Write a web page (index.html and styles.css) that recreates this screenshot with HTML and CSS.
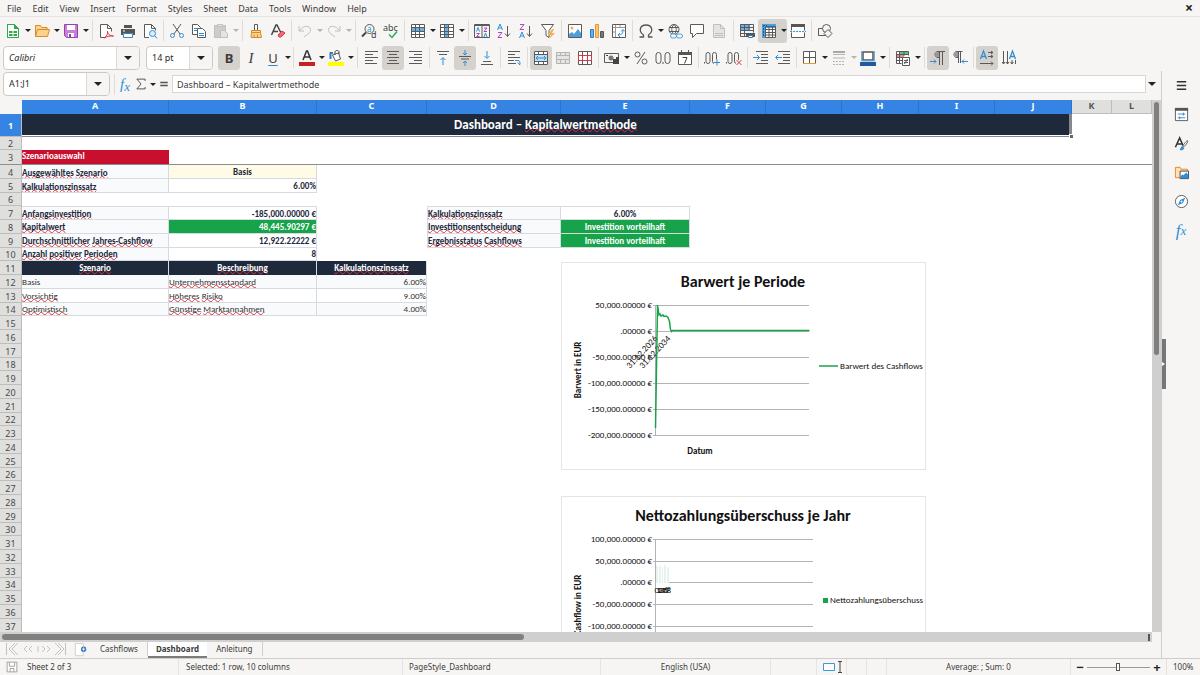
FILE: index.html
```
<!DOCTYPE html>
<html lang="en">
<head>
<meta charset="utf-8">
<title>Dashboard – Kapitalwertmethode</title>
<link rel="stylesheet" href="styles.css">
</head>
<body>
<div class="app">
<header class="menubar">
<nav class="menus"><button>File</button><button>Edit</button><button>View</button><button>Insert</button><button>Format</button><button>Styles</button><button>Sheet</button><button>Data</button><button>Tools</button><button>Window</button><button>Help</button></nav>
<button class="close" aria-label="Close">×</button>
</header>

<div class="toolbar standard">
<button class="tb" aria-label="New"><svg viewBox="0 0 16 16"><path class="g" fill="#fff" d="M2.500 1.500h7l4 4v9h-11zM9.500 1.500v4h4"/><path fill="#fff" stroke="#2fa84f" d="M2.500 1.500h7l4 4v9h-11z"/><path fill="#2fa84f" d="M9 1l5 5H9zM4 8h8v5H4z"/><path stroke="#fff" d="M4 10.500h8M8 8v5"/></svg></button><button class="dd" aria-label="New options"></button>
<button class="tb" aria-label="Open"><svg viewBox="0 0 16 16"><path fill="#fbd38c" stroke="#d98b2b" d="M1.500 13.500v-11h5l1.500 2h5v2M1.500 13.500l2-7h12l-2 7z"/></svg></button><button class="dd" aria-label="Open options"></button>
<button class="tb" aria-label="Save"><svg viewBox="0 0 16 16"><path fill="#c77fd8" stroke="#9a3fb0" d="M1.500 1.500h13v13h-11l-2-2z"/><path fill="#fff" d="M4 2h8v5H4zM5 10h6v4H5z"/><path fill="#9a3fb0" d="M6 11h2v3H6z"/></svg></button><button class="dd" aria-label="Save options"></button>
<i class="sep"></i>
<button class="tb" aria-label="Export PDF"><svg viewBox="0 0 16 16"><path class="g" fill="#fff" d="M8 14.500H2.500v-13h7l4 4v3M9.500 1.500v4h4"/><path stroke="#dc3545" d="M6 15c3-2 4-4 3.500-7 0 3 2 5 6 5-3-.5-6 .3-9.500 2"/></svg></button>
<button class="tb" aria-label="Print"><svg viewBox="0 0 16 16"><path fill="#555" d="M1 6h14v6h-2v-2H3v2H1zM4 2h8v3H4z"/><path fill="#fff" stroke="#3a87c8" d="M3.500 10.500h9v4h-9z"/><path stroke="#fff" d="M3 8h2"/></svg></button>
<button class="tb" aria-label="Preview"><svg viewBox="0 0 16 16"><path class="g" fill="#fff" d="M7 14.500H2.500v-13h7l4 4v2M9.500 1.500v4h4"/><circle cx="10.500" cy="10.500" r="3" fill="#dbeefa" stroke="#2f8fd6"/><path stroke="#2f8fd6" d="M13 13l2 2.500"/></svg></button>
<i class="sep tight"></i>
<button class="tb" aria-label="Cut"><svg viewBox="0 0 16 16"><path class="g" d="M4 1l7 10M12 1L5 11"/><circle cx="3.500" cy="12.500" r="2" stroke="#2f8fd6"/><circle cx="12.500" cy="12.500" r="2" stroke="#2f8fd6"/></svg></button>
<button class="tb" aria-label="Copy"><svg viewBox="0 0 16 16"><path class="g" fill="#fff" d="M1.500 1.500h5l3 3v7h-8z"/><path class="g" fill="#fff" d="M6.500 5.500h5l3 3v6h-8z"/><path stroke="#2f8fd6" d="M3 5.500h3M3 7.500h3M8 10.500h5M8 12.500h5"/></svg></button>
<button class="tb off" aria-label="Paste"><svg viewBox="0 0 16 16"><path fill="#bbb" stroke="#aaa" d="M1.500 2.500h11v12h-11z"/><path fill="#ddd" stroke="#aaa" d="M4.500 1.500h5v2h-5zM7.500 7.500h4l3 3v4h-7z"/></svg></button><button class="dd off" aria-label="Paste options"></button>
<i class="sep"></i>
<button class="tb" aria-label="Clone formatting"><svg viewBox="0 0 16 16"><path class="g" fill="#fff" d="M6.500 1.500h3v6h-3z"/><path fill="#fbd38c" stroke="#d98b2b" d="M3.500 9.500v-2h9v2M3 14.500h10.500l-1-5h-9zM6 11.500v3M9.500 11.500v3"/></svg></button>
<button class="tb" aria-label="Clear formatting"><svg viewBox="0 0 16 16"><path stroke="#444" stroke-width="1.500" d="M1.500 12L6 2h1l4 8M3 8.500h5"/><path fill="#ef6b73" stroke="#dc3545" d="M8 12l4-4 3 2-4 4H9z"/></svg></button>
<i class="sep tight"></i>
<button class="tb off" aria-label="Undo"><svg viewBox="0 0 16 16"><path stroke="#aaa" d="M2 3v5h5M2.500 7.500C6 3 11 2 13 5c2 4-2 6-6 9"/></svg></button><button class="dd off" aria-label="Undo history"></button>
<button class="tb off" aria-label="Redo"><svg viewBox="0 0 16 16"><path stroke="#aaa" d="M14 3v5H9M13.500 7.500C10 3 5 2 3 5c-2 4 2 6 6 9"/></svg></button><button class="dd off" aria-label="Redo history"></button>
<i class="sep"></i>
<button class="tb" aria-label="Find and replace"><svg viewBox="0 0 16 16"><circle cx="8.500" cy="6" r="4.500" class="g"/><path stroke="#444" stroke-width="2" d="M5 9.500l-4 4"/><text x="6" y="8.500" font-size="8" fill="#2f8fd6">a</text><text x="10" y="15" font-size="9" fill="#444">d</text></svg></button>
<button class="tb" aria-label="Spelling"><svg class="wide" viewBox="0 0 18 16"><text x="1" y="8" font-size="9" fill="#444">abc</text><path stroke="#2fa860" stroke-width="1.500" d="M7 11.500l3 3 5-6"/></svg></button>
<i class="sep tight"></i>
<button class="tb" aria-label="Row"><svg viewBox="0 0 16 16"><path fill="#fff" d="M1 1h14v14H1z"/><path fill="#69b1e6" d="M1 5h14v3H1z"/><path class="g" d="M1.500 1.500h13v13h-13zM1 4.500h14M1 8.500h14M1 11.500h14M5.500 1v14M9.500 1v14"/></svg></button><button class="dd" aria-label="Row options"></button>
<button class="tb" aria-label="Column"><svg viewBox="0 0 16 16"><path fill="#fff" d="M1 1h14v14H1z"/><path fill="#69b1e6" d="M5 1h4v14H5z"/><path class="g" d="M1.500 1.500h13v13h-13zM1 4.500h14M1 8.500h14M1 11.500h14M5.500 1v14M9.500 1v14"/></svg></button><button class="dd" aria-label="Column options"></button>
<i class="sep"></i>
<button class="tb" aria-label="Sort"><svg viewBox="0 0 16 16"><path class="g" d="M.5 1.500h15v13H.500zM8 1v14M.5 2.500h15"/><path stroke="#2f8fd6" d="M2.500 8.500l1.500-4 1.500 4M10 14l1.500-4 1.500 4"/><path stroke="#a84ac0" d="M2.500 10.500h3l-3 3h3M10 5h3l-3 3.500h3"/></svg></button>
<button class="tb" aria-label="Sort ascending"><svg viewBox="0 0 16 16"><path stroke="#2f8fd6" d="M1.500 7L4 1l2.500 6M2.500 5h3"/><path stroke="#a84ac0" d="M2 9.500h4l-4 5h4"/><path class="g" d="M11.500 3v10M9 10.500l2.500 3 2.500-3"/></svg></button>
<button class="tb" aria-label="Sort descending"><svg viewBox="0 0 16 16"><path stroke="#a84ac0" d="M2 1.500h4l-4 5h4"/><path stroke="#2f8fd6" d="M1.500 15L4 9l2.500 6M2.500 13h3"/><path class="g" d="M11.500 3v10M9 10.500l2.500 3 2.500-3"/></svg></button>
<button class="tb" aria-label="AutoFilter"><svg viewBox="0 0 16 16"><path class="g" fill="#fff" d="M1.500 1.500h12l-4.500 6v7l-3-2v-5z"/><path fill="#f6b04c" d="M12 6l-4 6h3l-2 4 6-6h-3l2-4z"/></svg></button>
<i class="sep tight"></i>
<button class="tb" aria-label="Insert image"><svg viewBox="0 0 16 16"><path class="g" fill="#fff" d="M1.500 1.500h13v13h-13z"/><circle cx="5" cy="5" r="1.500" fill="#f6b04c"/><path fill="#4a9fdc" d="M2 14V11l3-2 2 2 4-5 3 4v4z"/></svg></button>
<button class="tb" aria-label="Insert chart"><svg viewBox="0 0 16 16"><path fill="#69b1e6" stroke="#2f7fc0" d="M1.500 6.500h3v8h-3z"/><path fill="#fbc573" stroke="#e39a35" d="M6.500 1.500h3v13h-3z"/><path fill="#777" stroke="#555" d="M11.500 8.500h3v6h-3z"/></svg></button>
<button class="tb" aria-label="Pivot table"><svg viewBox="0 0 16 16"><path class="g" fill="#fff" d="M1.500 1.500h13v13h-13z"/><path stroke="#999" d="M4.500 2v12M2 4.500h12M2 9h2M9 2v2"/><path stroke="#2f8fd6" d="M7 12c4 0 5-2 5-5M10 8.500l2-2 2 2M9 10l-2 2 2 2"/></svg></button>
<i class="sep tight"></i>
<button class="tb" aria-label="Special character"><svg viewBox="0 0 16 16"><path stroke="#555" stroke-width="1.300" d="M1.500 14h4v-2C0 8 2 2 8 2s8 6 2.500 10v2h4"/></svg></button><button class="dd" aria-label="Character list"></button>
<button class="tb" aria-label="Hyperlink"><svg viewBox="0 0 16 16"><circle cx="7" cy="6.500" r="5" class="g"/><path class="g" d="M2 4.500h10M2 8.500h10M7 1.500c-3 3-3 7 0 10M7 1.500c3 3 3 7 0 10"/><rect x="3.500" y="11" width="6" height="4" rx="2" fill="#f6f5f3" stroke="#4a9fdc"/><rect x="9.500" y="11" width="6" height="4" rx="2" fill="#f6f5f3" stroke="#4a9fdc"/></svg></button>
<button class="tb" aria-label="Comment"><svg viewBox="0 0 16 16"><path class="g" fill="#fff" d="M1.500 1.500h13v9h-7l-4 4v-4h-2z"/></svg></button>
<button class="tb off" aria-label="Headers and footers"><svg viewBox="0 0 16 16"><path fill="#ddd" stroke="#aaa" d="M2.500 1.500h7l4 4v9h-11z"/><path stroke="#aaa" d="M4 10.500h8M4 12.500h8M9.500 1.500v4h4"/></svg></button>
<i class="sep"></i>
<button class="tb" aria-label="Print area"><svg viewBox="0 0 16 16"><path fill="#69b1e6" d="M1 1h10v6H1z"/><path class="g" d="M1.500 1.500h13v8M1.500 1.500v12h6M1 4.500h13M1 7.500h13M1 10.500h6M5.500 1v12M10 1v7"/><path fill="#555" d="M7 10h9v4H7z"/><path fill="#fff" stroke="#2f7fc0" d="M9.500 12.500h4v2h-4z"/></svg></button>
<span class="on pair"><button class="tb" aria-label="Freeze rows and columns"><svg viewBox="0 0 16 16"><path fill="#fff" d="M5 5h10v10H5z"/><path fill="#4a9fdc" d="M1 1h14v4H5v10H1z"/><path class="g" d="M4.500 3.500h10v11h-10zM5 6.500h10M5 9.500h10M5 12h10M8 4v11M11.500 4v11"/><path stroke="#1c5f9c" stroke-dasharray="2 1" d="M2.500 2v12M2 2.500h4"/></svg></button><button class="dd" aria-label="Freeze options"></button></span>
<button class="tb" aria-label="Split window"><svg viewBox="0 0 16 16"><path class="g" fill="#fff" d="M1.500 1.500h13v13h-13z"/><path fill="#555" d="M1 1h14v3H1z"/><path stroke="#f6f5f3" stroke-width="2" d="M0 8.500h16"/><path stroke="#3a9ad9" stroke-dasharray="2 1" d="M0 8.500h16"/></svg></button>
<i class="sep tight"></i>
<button class="tb" aria-label="Shapes"><svg viewBox="0 0 16 16"><path class="g" d="M1.500 5.500h7v7h-7z"/><circle cx="9.500" cy="5.500" r="4" fill="#f6f5f3" class="g"/><path class="g" fill="#f6f5f3" d="M11 6.500l4 4-4 4-4-4z"/></svg></button>
</div>

<div class="toolbar formatting">
<div class="combo font"><input type="text" value="Calibri" aria-label="Font name"><button aria-label="Font list"></button></div>
<div class="combo size"><input type="text" value="14 pt" aria-label="Font size"><button aria-label="Size list"></button></div>
<button class="tb on letter bold">B</button>
<button class="tb letter ital">I</button>
<button class="tb letter under">U</button><button class="dd" aria-label="Underline options"></button>
<i class="sep tight"></i>
<button class="tb" aria-label="Font colour"><svg viewBox="0 0 16 16"><path stroke="#333" stroke-width="1.500" d="M4 10l3.500-9h1L12 10M5.500 7h5"/><path fill="#c9211e" d="M0 12h16v4H0z"/></svg></button><button class="dd" aria-label="Font colours"></button>
<button class="tb" aria-label="Highlight colour"><svg viewBox="0 0 16 16"><path fill="#fff" class="g" d="M4.500 5l6-2 2 6-5 2z"/><path stroke="#444" d="M7 5V2c0-2 4-2 4 0v2"/><path stroke="#2f7fc0" stroke-width="2" d="M2.500 9V3H5"/><path fill="#ffff00" d="M0 12h16v4H0z"/></svg></button><button class="dd" aria-label="Highlight colours"></button>
<i class="sep"></i>
<button class="tb" aria-label="Align left"><svg viewBox="0 0 16 16"><path class="g" d="M2 1.500h13M2 4.500h8M2 7.500h13M2 10.500h8M2 13.500h12"/></svg></button>
<button class="tb on" aria-label="Align centre"><svg viewBox="0 0 16 16"><path class="g" d="M2 1.500h12M4 4.500h8M2 7.500h12M4 10.500h8M2 13.500h12"/></svg></button>
<button class="tb" aria-label="Align right"><svg viewBox="0 0 16 16"><path class="g" d="M2 1.500h13M7 4.500h8M2 7.500h13M7 10.500h8M2 13.500h13"/></svg></button>
<i class="sep"></i>
<button class="tb" aria-label="Align top"><svg viewBox="0 0 16 16"><path class="g" d="M2 1.500h12M4 4.500h8"/><path stroke="#2f8fd6" d="M8 15V8M5.500 10L8 7.500l2.500 2.500"/></svg></button>
<button class="tb on" aria-label="Centre vertically"><svg viewBox="0 0 16 16"><path class="g" d="M2 6.500h12M4 9h8"/><path stroke="#2f8fd6" d="M8 0v5M6 3l2 2 2-2M8 16v-5M6 13l2-2 2 2"/></svg></button>
<button class="tb" aria-label="Align bottom"><svg viewBox="0 0 16 16"><path class="g" d="M4 11.500h8M2 14.500h12"/><path stroke="#2f8fd6" d="M8 1v7M5.500 6L8 8.500 10.500 6"/></svg></button>
<i class="sep tight"></i>
<button class="tb" aria-label="Wrap text"><svg viewBox="0 0 16 16"><path class="g" d="M2 1.500h12M2 4.500h7M2 7.500h12M2 10.500h6M2 13.500h8"/><path stroke="#2f8fd6" d="M9 10.500h3c2 0 2 2 2 4M11.500 12.500l2.500 2.500"/></svg></button>
<i class="sep tight"></i>
<button class="tb on" aria-label="Merge cells"><svg viewBox="0 0 16 16"><path fill="#fff" d="M1 1h14v14H1z"/><path fill="#bfe0f5" d="M1 5h14v6H1z"/><path class="g" d="M1.500 1.500h13v13h-13zM1 4.500h14M1 11.500h14M5.500 1v3M10.500 1v3M5.500 12v3M10.500 12v3"/><path stroke="#2f8fd6" d="M3 8h10M5 6L3 8l2 2M11 6l2 2-2 2"/></svg></button>
<button class="tb off" aria-label="Merge"><svg viewBox="0 0 16 16"><path fill="#ddd" stroke="#999" d="M1.500 2.500h13v11h-13zM1 5.500h14M1 9.500h14M5.500 2v3M10.500 2v3M5.500 10v4M10.500 10v4"/></svg></button>
<button class="tb" aria-label="Unmerge cells"><svg viewBox="0 0 16 16"><path fill="#fff" class="g" d="M1.500 1.500h13v13h-13zM5.500 1v14M10.500 1v14"/><path stroke="#dc3545" d="M1 5.500h14M1 10.500h14M1.500 5v6M5.500 5v6M10.500 5v6M14.500 5v6"/></svg></button>
<i class="sep tight"></i>
<button class="tb" aria-label="Currency"><svg viewBox="0 0 16 16"><path class="g" d="M.5 3.500h14v9H.500z"/><circle cx="7" cy="8" r="2.500" fill="#777"/><path fill="#444" d="M9 9h3v5H9zM12 7h3v7h-3zM2 5h2v1H2z"/></svg></button><button class="dd" aria-label="Currency list"></button>
<button class="tb" aria-label="Percent"><svg viewBox="0 0 16 16"><path class="g" d="M12 2L4 14"/><circle cx="4.500" cy="4.500" r="2.500" class="g"/><circle cx="11.500" cy="11.500" r="2.500" class="g"/></svg></button>
<button class="tb" aria-label="Number"><svg viewBox="0 0 16 16"><rect x="1" y="2.500" width="5" height="11" rx="2.500" class="g"/><rect x="10" y="2.500" width="5" height="11" rx="2.500" class="g"/><path fill="#555" d="M7.500 12h1v2h-1z"/></svg></button>
<button class="tb" aria-label="Date"><svg viewBox="0 0 16 16"><path class="g" fill="#fff" d="M1.500 2.500h13v12h-13z"/><path fill="#555" d="M1 2h14v3H1zM4 0h1v2H4zM11 0h1v2h-1z"/><path stroke="#444" d="M5.500 7.500h4.500l-2.500 6"/></svg></button>
<i class="sep tight"></i>
<button class="tb" aria-label="Add decimal"><svg class="wide" viewBox="0 0 18 16"><rect x="3" y="2.500" width="4" height="11" rx="2" class="g"/><rect x="9.500" y="2.500" width="4" height="11" rx="2" class="g"/><path fill="#555" d="M1 12h1v1.500H1z"/><path stroke="#f6f5f3" stroke-width="3" d="M11 12.500h6M14 9.500v6"/><path stroke="#2f8fd6" d="M11 12.500h6M14 9.500v6"/></svg></button>
<button class="tb" aria-label="Delete decimal"><svg class="wide" viewBox="0 0 18 16"><rect x="3" y="2.500" width="4" height="11" rx="2" class="g"/><rect x="9.500" y="2.500" width="4" height="11" rx="2" class="g"/><path fill="#555" d="M1 12h1v1.500H1z"/><path stroke="#f6f5f3" stroke-width="3" d="M11.500 10l5 5M16.500 10l-5 5"/><path stroke="#dc3545" d="M11.500 10l5 5M16.500 10l-5 5"/></svg></button>
<i class="sep tight"></i>
<button class="tb" aria-label="Increase indent"><svg viewBox="0 0 16 16"><path class="g" d="M3 1.500h12M8 4.500h7M8 7.500h7M8 10.500h7M3 13.500h12"/><path stroke="#2f8fd6" d="M0 7.500h6M4 5l2.500 2.500L4 10"/></svg></button>
<button class="tb" aria-label="Decrease indent"><svg viewBox="0 0 16 16"><path class="g" d="M3 1.500h12M8 4.500h7M8 7.500h7M8 10.500h7M3 13.500h12"/><path stroke="#2f8fd6" d="M1 7.500h6M3 5L.500 7.500 3 10"/></svg></button>
<i class="sep tight"></i>
<button class="tb" aria-label="Borders"><svg viewBox="0 0 16 16"><path fill="#fff" class="g" d="M1.500 1.500h12v12h-12zM7.500 1v12M1 7.500h13"/><path stroke="#e39a35" d="M1 13.500h13"/></svg></button><button class="dd" aria-label="Border list"></button>
<button class="tb off" aria-label="Border style"><svg viewBox="0 0 16 16"><path stroke="#999" d="M2 4.500h12M2 8h12"/><path stroke="#888" stroke-width="2" d="M2 2h12"/><path stroke="#999" stroke-dasharray="2 1" d="M2 11.500h12M2 14.500h12"/></svg></button><button class="dd off" aria-label="Border styles"></button>
<button class="tb" aria-label="Border colour"><svg viewBox="0 0 16 16"><path fill="#fff" stroke="#555" stroke-width="1.500" d="M3 2h10v8H3z"/><path stroke="#69b1e6" d="M1.500 1v10h13V1"/><path fill="#1c5f9c" d="M0 12h16v4H0z"/></svg></button><button class="dd" aria-label="Border colours"></button>
<i class="sep"></i>
<button class="tb" aria-label="Conditional formatting"><svg viewBox="0 0 16 16"><path fill="#fff" d="M1 1h12v12H1z"/><path fill="#5fc27c" d="M5 1h8v3H5z"/><path fill="#f08a8a" d="M1 5h8v3H1z"/><path class="g" d="M1.500 1.500h12v4M1.500 1.500v12h5M1 4.500h12M1 7.500h6M1 10.500h6M4.500 1v12M9 1v5"/><path fill="#fff" class="g" d="M7.500 7.500h7v8h-7zM9 10.500h4M9 12.500h4M12.500 9l-3 5"/></svg></button><button class="dd" aria-label="Conditional list"></button>
<i class="sep"></i>
<button class="tb on" aria-label="Left to right"><svg viewBox="0 0 16 16"><path stroke="#2f8fd6" d="M0 11.500h6M4 9.500l2 2-2 2"/><path class="g" d="M15 1.500H8c-4 0-4 6 0 6h1.500M9.500 2v13M12.500 2v13"/><path fill="#999" d="M9 2H8C4.500 2 4.500 7 8 7h1z"/></svg></button>
<button class="tb" aria-label="Right to left"><svg viewBox="0 0 16 16"><path class="g" d="M10.500 1.500H5c-4 0-4 6 0 6h1.500M6.500 2v11M8.500 2v11"/><path fill="#999" d="M6 2H5C1.500 2 1.500 7 5 7h1z"/><path stroke="#2f8fd6" d="M10 11.500h6M12 9.500l-2 2 2 2"/></svg></button>
<i class="sep tight"></i>
<button class="tb on" aria-label="Horizontal text"><svg viewBox="0 0 16 16"><path stroke="#2f8fd6" stroke-width="1.300" d="M1.500 9L4.500 1l3 8M2.500 6.500h4"/><path class="g" d="M9 2.500h5M9 6.500h5M1 13.500h13M12 1l2 1.500L12 4M12 5l2 1.500L12 8M12 11.500l2 2-2 2"/></svg></button>
<button class="tb" aria-label="Vertical text"><svg viewBox="0 0 16 16"><path stroke="#2f8fd6" stroke-width="1.300" d="M8.500 9l3-8 3 8M9.500 6.500h4"/><path class="g" d="M2.500 1v13M6.500 1v13M11 10v4M14.500 10v4M1 12l1.500 2L4 12M5 12l1.500 2L8 12M9.500 12l1.500 2 1.500-2"/></svg></button>
</div>

<div class="work">
<main class="doc">
<div class="formulabar">
<div class="combo name"><input type="text" value="A1:J1" aria-label="Name box"><button aria-label="Named ranges"></button></div>
<i class="sep"></i>
<button class="fx" aria-label="Function wizard">f<sub>x</sub></button>
<button class="fn" aria-label="Sum"><svg viewBox="0 0 16 16"><path stroke="#555" stroke-width="1.300" d="M13.500 4V1.500h-11L8 8l-5.500 6.500h11V12"/></svg></button><button class="dd" aria-label="Functions"></button>
<button class="fn" aria-label="Formula"><svg viewBox="0 0 16 16"><path stroke="#555" stroke-width="2" d="M3 6h10M3 10h10"/></svg></button>
<input class="formula" type="text" value="Dashboard – Kapitalwertmethode" aria-label="Formula">
<button class="dd big" aria-label="Expand formula bar"></button>
</div>
<div class="sheetarea">
<div class="sheet">
<table>
<colgroup><col class="w22"><col class="w147"><col class="w148"><col class="w110"><col class="w134"><col class="w129"><col class="w76"><col class="w76"><col class="w77"><col class="w76"><col class="w77"><col class="w40"><col></colgroup>
<thead><tr><th class="corner"></th><th>A</th><th>B</th><th>C</th><th>D</th><th>E</th><th>F</th><th>G</th><th>H</th><th>I</th><th>J</th><th class="plain">K</th><th class="plain">L</th></tr></thead>
<tbody>
<tr class="r1"><th class="sel">1</th><td colspan="10" class="title"><div class="titlebox">Dashboard – <u>Kapitalwertmethode</u></div></td><td colspan="2"></td></tr>
<tr class="r2"><th>2</th><td colspan="12"></td></tr>
<tr class="r3"><th>3</th><td class="red">Szenarioauswahl</td><td colspan="11"></td></tr>
<tr><th>4</th><td class="lab low"><u>Ausgewähltes</u> <u>Szenario</u></td><td class="cream mid">Basis</td><td colspan="10"></td></tr>
<tr><th>5</th><td class="lab low"><u>Kalkulationszinssatz</u></td><td class="val">6.00%</td><td colspan="10"></td></tr>
<tr><th>6</th><td colspan="12"></td></tr>
<tr><th>7</th><td class="lab top"><u>Anfangsinvestition</u></td><td class="val top">-185,000.00000 €</td><td></td><td class="lab top left"><u>Kalkulationszinssatz</u></td><td class="val mid top">6.00%</td><td colspan="7"></td></tr>
<tr><th>8</th><td class="lab"><u>Kapitalwert</u></td><td class="val green">48,445.90297 €</td><td></td><td class="lab left"><u>Investitionsentscheidung</u></td><td class="green mid">Investition vorteilhaft</td><td colspan="7"></td></tr>
<tr><th>9</th><td class="lab"><u>Durchschnittlicher</u> <u>Jahres-Cashflow</u></td><td class="val">12,922.22222 €</td><td></td><td class="lab left"><u>Ergebnisstatus</u> <u>Cashflows</u></td><td class="green mid">Investition vorteilhaft</td><td colspan="7"></td></tr>
<tr><th>10</th><td class="lab"><u>Anzahl</u> <u>positiver</u> <u>Perioden</u></td><td class="val">8</td><td colspan="10"></td></tr>
<tr><th>11</th><td class="navy"><u>Szenario</u></td><td class="navy"><u>Beschreibung</u></td><td class="navy"><u>Kalkulationszinssatz</u></td><td colspan="9"></td></tr>
<tr><th>12</th><td class="txt tint">Basis</td><td class="txt tint"><u>Unternehmensstandard</u></td><td class="num tint">6.00%</td><td colspan="9"></td></tr>
<tr><th>13</th><td class="txt"><u>Vorsichtig</u></td><td class="txt"><u>Höheres</u> <u>Risiko</u></td><td class="num">9.00%</td><td colspan="9"></td></tr>
<tr><th>14</th><td class="txt tint"><u>Optimistisch</u></td><td class="txt tint"><u>Günstige</u> <u>Marktannahmen</u></td><td class="num tint">4.00%</td><td colspan="9"></td></tr>
<tr><th>15</th><td colspan="12"></td></tr>
<tr><th>16</th><td colspan="12"></td></tr>
<tr><th>17</th><td colspan="12"></td></tr>
<tr><th>18</th><td colspan="12"></td></tr>
<tr><th>19</th><td colspan="12"></td></tr>
<tr><th>20</th><td colspan="12"></td></tr>
<tr><th>21</th><td colspan="12"></td></tr>
<tr><th>22</th><td colspan="12"></td></tr>
<tr><th>23</th><td colspan="12"></td></tr>
<tr><th>24</th><td colspan="12"></td></tr>
<tr><th>25</th><td colspan="12"></td></tr>
<tr><th>26</th><td colspan="12"></td></tr>
<tr><th>27</th><td colspan="12"></td></tr>
<tr><th>28</th><td colspan="12"></td></tr>
<tr><th>29</th><td colspan="12"></td></tr>
<tr><th>30</th><td colspan="12"></td></tr>
<tr><th>31</th><td colspan="12"></td></tr>
<tr><th>32</th><td colspan="12"></td></tr>
<tr><th>33</th><td colspan="12"></td></tr>
<tr><th>34</th><td colspan="12"></td></tr>
<tr><th>35</th><td colspan="12"></td></tr>
<tr><th>36</th><td colspan="12"></td></tr>
<tr><th>37</th><td colspan="12"></td></tr>
</tbody>
</table>
<i class="handle"></i>
<svg class="chart first" viewBox="0 0 365 208">
<text class="ct" x="182" y="25">Barwert je Periode</text>
<path class="grid" d="M92 43.500h156M92 69.500h156M92 95.500h156M92 121.500h156M92 147.500h156M92 173.500h156M94.500 43v131"/>
<g class="ax"><text x="91" y="46">50,000.00000 €</text><text x="91" y="72">.00000 €</text><text x="91" y="98">-50,000.00000 €</text><text x="91" y="124">-100,000.00000 €</text><text x="91" y="150">-150,000.00000 €</text><text x="91" y="176">-200,000.00000 €</text>
<text transform="translate(97 77) rotate(-47)">31.12.2026</text><text transform="translate(110 77) rotate(-47)">31.12.2034</text></g>
<path class="series" d="M94.500 166L96.500 43l1.500 10 1-1 1 2 2-1 1 1.500 2-.5 2 1.500 1.500 4 1 8 1 2 1-1h137"/>
<text class="at" transform="translate(20 108) rotate(-90)">Barwert in EUR</text>
<text class="at" x="139" y="192">Datum</text>
<path class="series" d="M258 104h19"/><text class="lg" x="279" y="107">Barwert des Cashflows</text>
</svg>
<svg class="chart second" viewBox="0 0 365 208">
<text class="ct" x="182" y="25">Nettozahlungsüberschuss je Jahr</text>
<path class="grid" d="M92 43.500h160M92 65.500h160M108 86.500h144M92 108.500h160M92 130.500h160M94.500 43v131"/>
<path fill="#e9f3ee" d="M95 70h2v17h-2zM98 70h2v17h-2zM101 71h1v16h-1zM103 69h2v18h-2zM106 71h2v16h-2z"/>
<g class="ax"><text x="91" y="46">100,000.00000 €</text><text x="91" y="68">50,000.00000 €</text><text x="91" y="89">.00000 €</text><text x="91" y="111">-50,000.00000 €</text><text x="91" y="133">-100,000.00000 €</text>
<text x="98" y="97">0</text><text x="100" y="97">1</text><text x="101" y="97">2</text><text x="103" y="97">3</text><text x="104" y="97">4</text><text x="106" y="97">5</text><text x="107" y="97">6</text><text x="109" y="97">7</text><text x="110" y="97">8</text></g>
<text class="at" transform="translate(20 109) rotate(-90)">Cashflow in EUR</text>
<path fill="#18a348" d="M262 102h5v5h-5z"/><text class="lg" x="269" y="107">Nettozahlungsüberschuss</text>
</svg>
</div>
<div class="vscroll"><i></i></div>
</div>
<div class="hscroll"><i></i><b></b></div>
<nav class="tabs">
<svg class="tabnav" viewBox="0 0 62 14"><path d="M1.500 1v12M10 1L4 7l6 6M13 1L7 7l6 6M22 4l-3 3 3 3M27 4l-3 3 3 3M33 4v6M37 4l3 3-3 3M42 4l3 3-3 3M50 1l6 6-6 6M53 1l6 6-6 6M60.500 1v12"/></svg>
<button class="addtab" aria-label="Add sheet"><svg viewBox="0 0 16 16"><path fill="#fff" stroke="#ccc" d="M1.500.500h9v14h-9z"/><circle cx="11" cy="7" r="3" fill="#2a6ebb"/><path stroke="#fff" d="M9 7h4M11 5v4"/></svg></button>
<button class="tab">Cashflows</button><button class="tab active">Dashboard</button><button class="tab">Anleitung</button>
</nav>
</main>
<aside class="sidebar">
<button aria-label="Sidebar settings"><svg viewBox="0 0 16 16"><path stroke="#333" stroke-width="1.500" d="M3 4h10M3 8h10M3 12h10"/></svg></button>
<button aria-label="Properties"><svg viewBox="0 0 16 16"><path class="g" fill="#fff" d="M1.500 1.500h13v13h-13z"/><path fill="#555" d="M1 1h14v3H1z"/><path stroke="#3a87c8" d="M4 7.500h8M10 6v3M4 11.500h8M6 10v3"/></svg></button>
<button aria-label="Styles"><svg viewBox="0 0 16 16"><path stroke="#333" stroke-width="1.600" d="M1.500 12L6 2l4 9M3 8.500h6"/><path fill="#fff" stroke="#555" d="M14.500 5c1 1-3 6-4 6.500l-1-1c.5-1 4-6 5-5.500z"/><path fill="#2f8fd6" d="M9 11l2 2c-1 2-3 2.500-5 2 1-1 1-4 3-4z"/></svg></button>
<button aria-label="Gallery"><svg viewBox="0 0 16 16"><path fill="#fde3b5" stroke="#e8842f" d="M1.500 13.500v-11h5l1 2h7v9z"/><path fill="#fff" stroke="#444" d="M6.500 6.500h9v8h-9z"/><path fill="#2f8fd6" d="M7 14v-2l2-2 1 1 3-3 2 2v4z"/></svg></button>
<button aria-label="Navigator"><svg viewBox="0 0 16 16"><circle cx="8" cy="8" r="6.500" fill="#fff" class="g"/><path fill="#2f8fd6" d="M12 4l-2.500 5.500L4 12l2.500-5.500z"/><circle cx="8" cy="8" r="1" fill="#fff"/></svg></button>
<button class="fx" aria-label="Functions">f<sub>x</sub></button>
<i class="grip"></i>
</aside>
</div>

<footer class="status">
<span class="s0"><svg viewBox="0 0 16 16"><path fill="#fff" stroke="#888" d="M1.500 1.500h13v13h-13z"/><path stroke="#888" d="M4.500 2v5h7V2M5.500 14v-4h5v4"/></svg></span>
<span class="s1">Sheet 2 of 3</span><span class="s2">Selected: 1 row, 10 columns</span><span class="s3">PageStyle_Dashboard</span><span class="s4">English (USA)</span><span class="s5"></span>
<span class="s6"><svg viewBox="0 0 22 14"><path fill="#fff" stroke="#3a9ad9" d="M.5 3.500h11v7H.500z"/><path stroke="#444" d="M15 1.500h4M15 12.500h4M17 1.500v11"/></svg></span>
<span class="s7"></span><span class="s8"></span>
<span class="s9">Average: ; Sum: 0</span>
<span class="zoom"><button aria-label="Zoom out">−</button><input type="range" min="0" max="100" value="49" aria-label="Zoom"><button aria-label="Zoom in">+</button></span>
<span class="s11">100%</span>
</footer>
</div>
</body>
</html>
```
FILE: styles.css
```
* { box-sizing: border-box; }
body { margin: 0; background: #f6f5f3; color: #3c3c3c; font: 9px/14px "Noto Sans", sans-serif; overflow: hidden; }
button, input { font: inherit; color: inherit; border: 0; background: none; padding: 0; margin: 0; min-width: 0; }
svg { fill: none; display: block; }
svg text { stroke: none; }
.g { stroke: #5a5a5a; }
.app { display: flex; flex-direction: column; height: 100vh; }

.menubar { display: flex; justify-content: space-between; height: 17px; border-bottom: 1px solid #e6e4e1; padding-right: 7px; }
.menus { display: flex; gap: 11px; padding: 1px 0 0 7px; }
.close { font-size: 14px; font-weight: 700; color: #222; }

.toolbar { display: flex; align-items: center; height: 27px; padding-left: 2px; }
.toolbar.formatting { padding-left: 3px; }
.tb { width: 22px; height: 24px; flex: none; display: flex; align-items: center; justify-content: center; border-radius: 3px; }
.tb svg { width: 16px; height: 16px; overflow: visible; }
.tb svg.wide { width: 18px; }
.on { background: #d5d1cd; border-radius: 3px; }
.pair { display: flex; flex: none; }
.off { opacity: .7; }
.dd { width: 7px; height: 24px; flex: none; display: flex; align-items: center; justify-content: center; }
.dd::after, .combo button::after { content: ""; border: 3px solid transparent; border-top-color: #222; border-bottom: 0; }
.dd.off::after { border-top-color: #999; }
.sep { width: 6px; height: 21px; flex: none; background: linear-gradient(#dedcd9, #dedcd9) center / 1px 100% no-repeat; }
.sep.tight { width: 5px; }
.letter { font-size: 13px; }
.bold { font-weight: 700; }
.ital { font-family: "Liberation Serif", serif; font-style: italic; font-size: 15px; }
.under { text-decoration: underline #3a87c8 1px; text-underline-offset: 2px; }

.combo { display: flex; height: 24px; background: #fff; border: 1px solid #cdc9c5; border-radius: 4px; overflow: hidden; flex: none; }
.combo input { flex: 1; padding-left: 5px; color: #2a2a2a; }
.combo button { width: 23px; background: #f6f5f3; border-left: 1px solid #dcd9d6; display: flex; align-items: center; justify-content: center; }
.combo button::after { border-width: 4px; border-bottom: 0; }
.font { width: 137px; margin-right: 6px; }
.font input { font-style: italic; }
.size { width: 67px; margin-right: 5px; }
.name { width: 107px; margin-right: 1px; }

.work { flex: 1; min-height: 0; display: grid; grid-template-columns: minmax(0, 1fr) 38px; }
.doc { display: flex; flex-direction: column; min-height: 0; border-right: 1px solid #cfccc9; }
.formulabar { display: flex; align-items: center; height: 29px; padding: 0 3px 3px 3px; }
.fx { width: 16px; color: #2f8fd6; font: italic 15px/18px "Liberation Serif", serif; }
.fx sub { font-size: 13px; line-height: 0; vertical-align: -2px; }
.fn { width: 16px; display: flex; justify-content: center; }
.fn svg { width: 12px; height: 14px; }
.formula { flex: 1; height: 18px; background: #fff; border: 1px solid #d8d5d2; padding-left: 4px; }
.dd.big { width: 12px; }
.dd.big::after { border-width: 4px; border-bottom: 0; }

.sheetarea { flex: 1; min-height: 0; display: flex; }
.sheet { flex: 1; min-width: 0; position: relative; overflow: hidden; background: #fff; }
table { table-layout: fixed; width: 100%; border-collapse: separate; border-spacing: 0; font: 700 9px/12px Carlito, Lato, sans-serif; color: #1e293b; }
.w22 { width: 22px; } .w147 { width: 147px; } .w148 { width: 148px; } .w110 { width: 110px; } .w134 { width: 134px; } .w129 { width: 129px; }
.w76 { width: 76px; } .w77 { width: 77px; } .w40 { width: 40px; }
th, td { padding: 0; overflow: hidden; white-space: nowrap; }
tr { height: 14px; }
tbody tr:nth-child(4n+6) { height: 13px; }
thead th { height: 14px; background: #3584e4; color: #fff; border-right: 1px solid #2b74cc; font: 700 9px/12px "Noto Sans", sans-serif; vertical-align: top; }
thead th.plain { background: #dfdfdd; color: #555; border-right-color: #bdbdbb; border-bottom: 1px solid #bdbdbb; }
thead th.corner { background: #f6f5f3; border: 0; }
tbody th { background: #dfdfdd; color: #4a4a4a; border-right: 1px solid #bdbdbb; border-bottom: 1px solid #bdbdbb; padding-top: 1px; font: 400 9px/11px "Noto Sans", sans-serif; }
tbody th.sel { background: #3584e4; color: #fff; font-weight: 700; }
tbody tr.r1 { height: 23px; }
tbody tr.r2 { height: 13px; }
tbody tr.r3 { height: 15px; }
.r3 th, .r3 td { border-bottom: 1px solid #8c8c8c; }
.r3 td.red { line-height: 12px; vertical-align: top; }
.title { background: #85878c; padding: 0 3px 1px 0; }
.titlebox { background: #1e293b; color: #fff; border-bottom: 1px solid #fff; font-size: 13px; line-height: 21px; text-align: center; }
.handle { position: absolute; left: 1069px; top: 34px; width: 5px; height: 5px; background: #666; border: 1px solid #fff; }
u { text-decoration: underline wavy #e0313d 1px; text-underline-offset: -1px; text-decoration-skip-ink: none; }
.red { background: #c8102e; color: #fff; }
.lab, .val, .cream, .green, .txt, .num { border-right: 1px solid #d5dbe1; border-bottom: 1px solid #d5dbe1; }
.lab, .tint { background: #f8fafc; }
.low { line-height: 11px; padding-top: 2px; }
.top { border-top: 1px solid #d5dbe1; line-height: 11px; }
.left { border-left: 1px solid #d5dbe1; }
.val, .num { text-align: right; }
.mid { text-align: center; }
.cream { background: #fffbe6; }
.green { background: #16a34a; color: #fff; }
.navy { background: #1e293b; color: #fff; text-align: center; border-right: 1px solid #d5dbe1; }
.txt, .num { font-weight: 400; color: #333; }

.chart { position: absolute; left: 561px; width: 365px; height: 208px; background: #fff; outline: 1px solid #e4e4e4; outline-offset: -1px; font-family: Carlito, Lato, sans-serif; fill: none; }
.first { top: 162px; }
.second { top: 396px; }
.chart text { fill: #111; }
.ct { font-size: 16px; font-weight: 700; text-anchor: middle; }
.ax { font-size: 9px; text-anchor: end; }
.at { font-size: 9px; font-weight: 700; text-anchor: middle; }
.lg { font-size: 9px; }
.grid { stroke: #b3b3b3; }
.series { stroke: #18a348; stroke-width: 1.500; }

.vscroll { width: 9px; flex: none; background: #cfcfcf; padding: 2px; }
.vscroll i { display: block; width: 5px; height: 48%; border-radius: 3px; background: #7f7f7f; }
.hscroll { display: flex; justify-content: space-between; align-items: center; height: 10px; margin-right: 9px; background: #cfcfcf; padding: 0 2px; }
.hscroll i { width: 522px; height: 6px; border-radius: 3px; background: #7f817f; }
.hscroll b { width: 2px; height: 7px; background: #555; }
.tabs { display: flex; height: 16px; align-items: stretch; padding-left: 5px; font-size: 8px; }
.tabnav { width: 62px; height: 14px; stroke: #c4c2bf; }
.addtab { margin: 0 3px 0 7px; }
.addtab svg { width: 14px; height: 14px; }
.tab { padding: 0 9px; border-right: 1px solid #d0cdca; margin-bottom: 2px; }
.tab.active { background: #fff; font-weight: 700; border-right: 0; border-bottom: 2px solid #7c7c7c; padding: 0 8px; margin-bottom: 0; }

.sidebar { position: relative; display: flex; flex-direction: column; align-items: center; }
.sidebar button { width: 24px; height: 29px; display: flex; align-items: center; justify-content: center; }
.sidebar svg { width: 15px; height: 15px; }
.sidebar .fx { font-size: 17px; }
.grip { position: absolute; left: 0; top: 268px; width: 4px; height: 50px; background: #777; display: flex; align-items: center; }
.grip::after { content: ""; border: 2px solid transparent; border-left: 3px solid #fff; border-right: 0; }

.status { display: grid; grid-template-columns: 20px 159px 224px 198px 170px 46px 30px 20px 20px minmax(0, 1fr) 96px 33px; height: 17px; border-top: 1px solid #cfccc9; font-size: 8px; line-height: 16px; }
.status > span { border-right: 1px solid #e6e4e1; padding-left: 7px; white-space: nowrap; display: flex; align-items: center; }
.status > .s0 { padding-left: 6px; border: 0; }
.s0 svg { width: 12px; height: 12px; }
.status > .s3 { padding-left: 6px; }
.status > .s4, .status > .s9 { justify-content: center; padding: 0; }
.status > .s6 { padding-left: 6px; }
.s6 svg { width: 22px; height: 14px; }
.status > .s7 { padding: 0; }
.status > .zoom { padding: 0 4px; gap: 2px; }
.zoom button { font-size: 13px; font-weight: 700; width: 10px; color: #222; }
.zoom input { appearance: none; flex: 1; height: 9px; background: linear-gradient(#999, #999) center / 100% 1px no-repeat; }
.zoom input::-webkit-slider-thumb { appearance: none; width: 4px; height: 8px; border: 1px solid #555; background: #fff; }
.status > .s11 { border: 0; padding-left: 6px; }
```
